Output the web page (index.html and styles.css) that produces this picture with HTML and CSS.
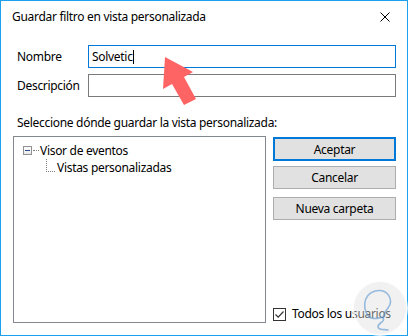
FILE: index.html
```html
<!doctype html>
<html lang="es">
    <head>
        <meta charset="UTF-8" />
        <title>Guardar filtro en vista personalizada</title>
        <link rel="stylesheet" href="styles.css">
    </head>

    <body>
        <div class="dialog">
            <div class="titlebar">
                <span class="title">Guardar filtro en vista personalizada</span>
                <svg class="close" width="10" height="10" viewBox="0 0 10 10">
                    <path d="M0.5 0.5 L9.5 9.5 M9.5 0.5 L0.5 9.5" stroke="#000" stroke-width="1" />
                </svg>
            </div>

            <div class="content">
                <div class="field">
                    <label class="field-label" for="nombre">Nombre</label>
                    <div class="text-input focused">
                        <span id="nombre">Solvetic</span><span class="caret"></span>
                    </div>
                </div>
                <div class="field">
                    <label class="field-label" for="descripcion">Descripción</label>
                    <div class="text-input" id="descripcion"></div>
                </div>

                <div class="section-label">Seleccione dónde guardar la vista personalizada:</div>

                <div class="main">
                    <div class="tree">
                        <div class="tree-row">
                            <span class="expander"><span class="minus"></span></span>
                            <span class="dots-h"></span>
                            <span class="tree-text">Visor de eventos</span>
                        </div>
                        <div class="tree-row child">
                            <span class="elbow"></span>
                            <span class="tree-text">Vistas personalizadas</span>
                        </div>
                    </div>

                    <div class="actions">
                        <button class="btn default">Aceptar</button>
                        <button class="btn">Cancelar</button>
                        <button class="btn spaced">Nueva carpeta</button>

                        <label class="check">
                            <span class="box">
                                <svg width="11" height="11" viewBox="0 0 11 11">
                                    <path d="M1.5 5.5 L4.2 8.2 L9.5 2.5" fill="none" stroke="#333" stroke-width="1.2" />
                                </svg>
                            </span>
                            <span>Todos los usuarios</span>
                        </label>
                    </div>
                </div>
            </div>

            <svg class="overlay" width="409" height="336" viewBox="0 0 409 336">
                <!-- watermark -->
                <circle cx="380" cy="308" r="27" fill="rgba(225,225,225,0.45)" stroke="rgba(255,255,255,0.8)" stroke-width="2" />
                <path d="M371 318 C362 312 362 295 375 291 C388 288 394 300 388 308 C385 312 383 314 383 318 M372 318 C377 320 381 316 383 318 C386 322 377 323 378 327 C379 331 386 329 388 330"
                    fill="none" stroke="rgba(90,150,210,0.6)" stroke-width="1.6" stroke-linecap="round" />
                <!-- arrow -->
                <polygon points="165,57 193,72 184,77 196,99 184,105 172,84 163,89" fill="#ff6464" />
            </svg>
        </div>
    </body>
</html>
```

FILE: styles.css
```css
* {
    box-sizing: border-box;
    margin: 0;
    padding: 0;
}

body {
    background: #fff;
    font-family: "Noto Sans", "Open Sans", sans-serif;
    font-size: 12px;
    letter-spacing: -0.3px;
    color: #000;
}

.dialog {
    position: relative;
    width: 408px;
    height: 336px;
    border: 1px solid #1aa1f0;
    background: #fff;
    display: flex;
    flex-direction: column;
}

.titlebar {
    height: 31px;
    padding: 0 17px 0 11px;
    display: flex;
    align-items: center;
    justify-content: space-between;
}

.title {
    line-height: 16px;
}

.close {
    display: block;
}

.content {
    flex: 1;
    padding: 13px 11px 12px 12px;
    display: flex;
    flex-direction: column;
}

.field {
    display: flex;
    align-items: center;
    height: 23px;
    margin-bottom: 6px;
}

.field-label {
    width: 75px;
    padding-left: 4px;
    flex-shrink: 0;
}

.text-input {
    flex: 1;
    height: 23px;
    border: 1px solid #7a7a7a;
    padding: 0 3px;
    display: flex;
    align-items: center;
    line-height: 16px;
}

.text-input.focused {
    border-color: #0078d7;
}

.caret {
    display: inline-block;
    width: 1px;
    height: 14px;
    background: #000;
}

.section-label {
    padding-left: 4px;
    margin-top: 12px;
    line-height: 16px;
    height: 20px;
}

.main {
    display: flex;
    flex: 1;
    gap: 7px;
    margin-top: 1px;
}

.tree {
    width: 253px;
    border: 1px solid #828790;
    padding: 5px 0 0 9px;
}

.tree-row {
    display: flex;
    align-items: center;
    height: 17px;
}

.expander {
    width: 9px;
    height: 9px;
    border: 1px solid #919191;
    background: linear-gradient(#fff, #e8e8e8);
    display: flex;
    align-items: center;
    justify-content: center;
}

.minus {
    width: 5px;
    height: 1px;
    background: #2b4a8c;
}

.dots-h {
    width: 6px;
    height: 1px;
    margin: 0 1px;
    border-top: 1px dotted #808080;
}

.tree-text {
    line-height: 16px;
}

.tree-row.child {
    padding-left: 23px;
}

.elbow {
    width: 9px;
    height: 13px;
    margin: -4px 2px 0 0;
    border-left: 1px dotted #808080;
    border-bottom: 1px dotted #808080;
}

.actions {
    flex: 1;
    display: flex;
    flex-direction: column;
    padding-top: 1px;
}

.btn {
    height: 23px;
    width: 123px;
    border: 1px solid #adadad;
    background: #e1e1e1;
    font-family: inherit;
    font-size: 12px;
    letter-spacing: inherit;
    color: #000;
    margin-bottom: 5px;
}

.btn.default {
    border: 2px solid #0078d7;
    height: 24px;
}

.btn.spaced {
    margin-top: 3px;
}

.check {
    margin-top: auto;
    margin-bottom: 1px;
    display: flex;
    align-items: center;
    gap: 6px;
    line-height: 16px;
    white-space: nowrap;
}

.box {
    width: 13px;
    height: 13px;
    border: 1px solid #333;
    background: #fff;
    display: flex;
    align-items: center;
    justify-content: center;
    flex-shrink: 0;
}

.box svg {
    display: block;
}

.overlay {
    position: absolute;
    left: -1px;
    top: -1px;
    pointer-events: none;
}
```
